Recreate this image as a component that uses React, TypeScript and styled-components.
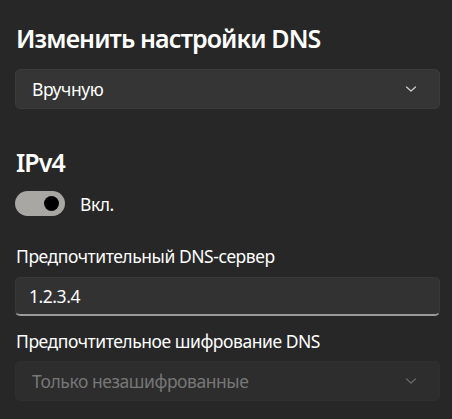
import React from "react";
import styled, { createGlobalStyle } from "styled-components";

const Global = createGlobalStyle`
  html, body { margin: 0; padding: 0; background: #272727; }
  body { font-family: "Noto Sans", "Open Sans", sans-serif; color: #ffffff; }
  * { box-sizing: border-box; }
`;

const Page = styled.div`
  display: flex;
  flex-direction: column;
  padding: 22px 12px 0 15px;
  width: 452px;
  height: 419px;
  background: #272727;
`;

const Heading = styled.div<{ $mt?: number }>`
  font-size: 25px;
  line-height: 32px;
  font-weight: 600;
  letter-spacing: -0.9px;
  color: #ffffff;
  margin-top: ${(p) => p.$mt ?? 0}px;
  padding-left: 1px;
`;

const Label = styled.div<{ $mt: number }>`
  font-size: 17.5px;
  line-height: 24px;
  letter-spacing: -0.45px;
  color: #ffffff;
  margin-top: ${(p) => p.$mt}px;
  padding-left: 1px;
`;

const Select = styled.div<{ $mt: number; $disabled?: boolean }>`
  display: flex;
  align-items: center;
  justify-content: space-between;
  height: 40px;
  margin-top: ${(p) => p.$mt}px;
  padding: 0 22px 0 16px;
  border-radius: 5px;
  background: ${(p) => (p.$disabled ? "#2d2d2d" : "#353535")};
  border: 1px solid ${(p) => (p.$disabled ? "#2f2f2f" : "#3b3b3b")};
  font-size: 17.5px;
  letter-spacing: -0.45px;
  color: ${(p) => (p.$disabled ? "#777777" : "#ffffff")};
`;

const TextBox = styled.div`
  display: flex;
  align-items: center;
  height: 39px;
  margin-top: 9px;
  padding: 0 13px;
  border-radius: 5px;
  background: #323232;
  border: 1px solid #383838;
  border-bottom: 2px solid #9a9a9a;
  font-size: 17.5px;
  letter-spacing: -0.45px;
  color: #ffffff;
`;

const ToggleRow = styled.div`
  display: flex;
  align-items: center;
  gap: 15px;
  margin-top: 13px;
  font-size: 17.5px;
  letter-spacing: -0.45px;
`;

const Track = styled.div`
  position: relative;
  width: 50px;
  height: 25px;
  border-radius: 13px;
  background: #a8a7a3;
`;

const Thumb = styled.div`
  position: absolute;
  top: 5px;
  left: 29px;
  width: 15px;
  height: 15px;
  border-radius: 50%;
  background: #000000;
`;

const Chevron = ({ color }: { color: string }) => (
  <svg width="12" height="8" viewBox="0 0 12 8">
    <path d="M1.5 2 L6 6 L10.5 2" fill="none" stroke={color} strokeWidth="1.2" strokeLinecap="round" strokeLinejoin="round" />
  </svg>
);

export default function App() {
  return (
    <>
      <Global />
      <Page>
        <Heading>Изменить настройки DNS</Heading>
        <Select $mt={15}>
          <span>Вручную</span>
          <Chevron color="#d0d0d0" />
        </Select>
        <Heading $mt={37}>IPv4</Heading>
        <ToggleRow>
          <Track>
            <Thumb />
          </Track>
          <span>Вкл.</span>
        </ToggleRow>
        <Label $mt={28}>Предпочтительный DNS-сервер</Label>
        <TextBox>1.2.3.4</TextBox>
        <Label $mt={13}>Предпочтительное шифрование DNS</Label>
        <Select $mt={8} $disabled>
          <span>Только незашифрованные</span>
          <Chevron color="#6a6a6a" />
        </Select>
      </Page>
    </>
  );
}
